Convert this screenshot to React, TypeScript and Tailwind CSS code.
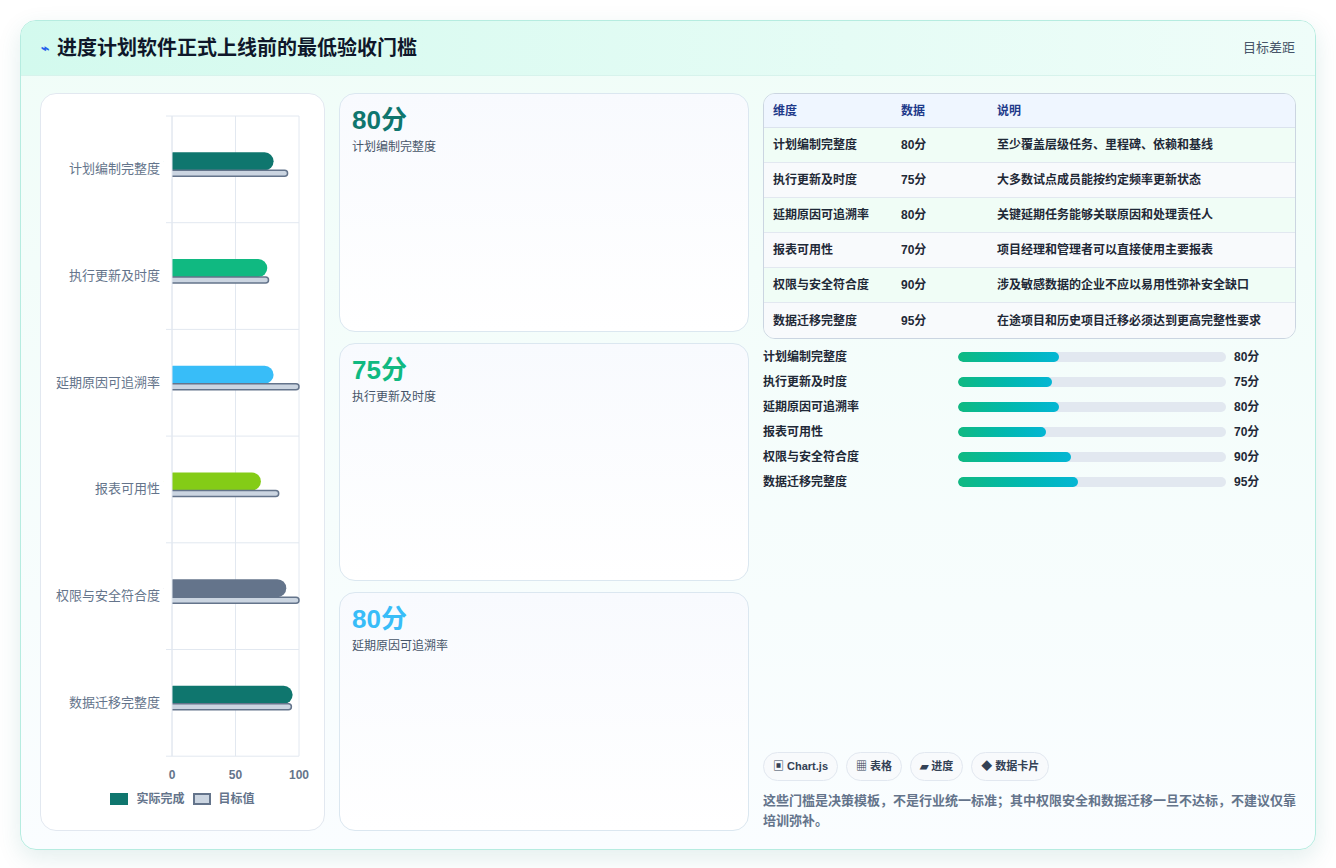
const rows = [
  { name: "计划编制完整度", v: 80, t: 91, c: "#0f766e", note: "至少覆盖层级任务、里程碑、依赖和基线" },
  { name: "执行更新及时度", v: 75, t: 76, c: "#10b981", note: "大多数试点成员能按约定频率更新状态" },
  { name: "延期原因可追溯率", v: 80, t: 100, c: "#38bdf8", note: "关键延期任务能够关联原因和处理责任人" },
  { name: "报表可用性", v: 70, t: 84, c: "#84cc16", note: "项目经理和管理者可以直接使用主要报表" },
  { name: "权限与安全符合度", v: 90, t: 100, c: "#64748b", note: "涉及敏感数据的企业不应以易用性弥补安全缺口" },
  { name: "数据迁移完整度", v: 95, t: 94, c: "#0f766e", note: "在途项目和历史项目迁移必须达到更高完整性要求" },
];

const font = { fontFamily: '"Liberation Sans", "Noto Sans CJK SC", sans-serif' };

function Chart() {
  const x0 = 131, w = 127, top = 22, rowH = 106.7;
  return (
    <svg width="284" height="696" className="block">
      {[0, 50, 100].map((p) => (
        <line key={p} x1={x0 + (w * p) / 100} x2={x0 + (w * p) / 100} y1={top} y2={top + rowH * 6} stroke="#e2e8f0" />
      ))}
      {Array.from({ length: 7 }).map((_, i) => (
        <line key={i} x1={x0 - 6} x2={x0 + w} y1={top + rowH * i} y2={top + rowH * i} stroke="#e2e8f0" />
      ))}
      {rows.map((r, i) => {
        const cy = top + rowH * i + rowH / 2;
        return (
          <g key={r.name}>
            <text x={119} y={cy + 4} textAnchor="end" fontSize="13" fill="#64748b">{r.name}</text>
            <rect x={x0 - 8} y={cy - 17} width={(w * r.v) / 100 + 8} height={18} rx={9} fill={r.c} />
            <rect x={x0 - 6} y={cy + 1} width={(w * r.t) / 100 + 6} height={6} rx={3} fill="#cbd5e1" stroke="#64748b" strokeWidth="1.5" />
            <rect x={x0 - 8} y={cy - 18} width={8} height={28} fill="white" />
          </g>
        );
      })}
      <line x1={x0} x2={x0} y1={top} y2={top + rowH * 6} stroke="#e2e8f0" />
      {[0, 50, 100].map((p) => (
        <text key={p} x={x0 + (w * p) / 100} y={top + rowH * 6 + 23} textAnchor="middle" fontSize="12" fontWeight="bold" fill="#64748b">{p}</text>
      ))}
    </svg>
  );
}

export default function App() {
  const cards = [
    { v: "80分", n: "计划编制完整度", c: "text-[#0f766e]" },
    { v: "75分", n: "执行更新及时度", c: "text-[#10b981]" },
    { v: "80分", n: "延期原因可追溯率", c: "text-[#38bdf8]" },
  ];
  return (
    <div style={font} className="w-[1336px] h-[868px] bg-white pt-5 px-5 pb-[18px]">
      <div className="h-full rounded-2xl border border-[#b6ece0] shadow-[0_8px_24px_rgba(15,118,110,0.12)] overflow-hidden flex flex-col bg-gradient-to-b from-[#f0fdf8] to-[#fafdff]">
        <div className="h-[55px] shrink-0 flex items-center justify-between px-5 bg-gradient-to-r from-[#d3faee] to-[#effdf9] border-b border-[#d7f3ec]">
          <div className="flex items-center gap-2">
            <span className="text-[#2563eb] text-sm font-bold">⌁</span>
            <h1 className="text-[20px] font-bold text-[#0f172a]">进度计划软件正式上线前的最低验收门槛</h1>
          </div>
          <span className="text-[13px] text-[#475569]">目标差距</span>
        </div>
        <div className="flex-1 min-h-0 flex gap-[14px] px-[19px] pt-[17px] pb-[18px]">
          <div className="w-[285px] shrink-0 bg-white rounded-2xl border border-[#e2e8f0] flex flex-col">
            <Chart />
            <div className="flex items-center justify-center gap-2 text-[12px] font-bold text-[#64748b]">
              <span className="w-[18px] h-[12px] bg-[#0f766e]" />实际完成
              <span className="w-[18px] h-[12px] bg-[#cbd5e1] border-2 border-[#64748b]" />目标值
            </div>
          </div>
          <div className="w-[410px] shrink-0 flex flex-col gap-[11px]">
            {cards.map((c) => (
              <div key={c.n} className="flex-1 rounded-2xl border border-[#dbe7f0] bg-gradient-to-b from-[#f8fafe] to-white px-3 pt-[10px]">
                <div className={`text-[26px] font-bold leading-8 ${c.c}`}>{c.v}</div>
                <div className="text-[12px] text-[#475569] mt-[2px]">{c.n}</div>
              </div>
            ))}
          </div>
          <div className="flex-1 flex flex-col min-w-0">
            <div className="rounded-xl border border-[#cbd5e1] overflow-hidden text-[12px]">
              <div className="flex h-[34px] items-center bg-[#eff6ff] text-[#1e3a8a] font-bold border-b border-[#dbe3ee]">
                <div className="w-[137px] pl-[9px]">维度</div>
                <div className="w-[96px]">数据</div>
                <div>说明</div>
              </div>
              {rows.map((r, i) => (
                <div key={r.name} className={`flex h-[35px] items-center text-[#1f2937] font-semibold ${i < 5 ? "border-b border-[#e2e8f0]" : ""} ${i % 2 ? "bg-[#f8fafc]" : "bg-[#f0fdf6]"}`}>
                  <div className="w-[137px] pl-[9px]">{r.name}</div>
                  <div className="w-[96px]">{r.v}分</div>
                  <div>{r.note}</div>
                </div>
              ))}
            </div>
            <div className="mt-[9px] flex flex-col gap-[7px]">
              {rows.map((r) => (
                <div key={r.name} className="flex items-center h-[18px] text-[12px] font-semibold text-[#1f2937]">
                  <div className="w-[195px]">{r.name}</div>
                  <div className="w-[268px] h-[10px] rounded-full bg-[#e2e8f0] overflow-hidden">
                    <div className="h-full rounded-full bg-gradient-to-r from-[#10b981] to-[#06b6d4]" style={{ width: `${r.v * 0.47}%` }} />
                  </div>
                  <div className="ml-2">{r.v}分</div>
                </div>
              ))}
            </div>
            <div className="mt-auto">
              <div className="flex gap-2 text-[11px] font-bold text-[#334155]">
                {["▣ Chart.js", "▦ 表格", "▰ 进度", "◆ 数据卡片"].map((t) => (
                  <span key={t} className="h-[29px] px-[9px] flex items-center rounded-full border border-[#e2e8f0] bg-[#f8fafc]">{t}</span>
                ))}
              </div>
              <p className="mt-[10px] text-[13px] leading-5 font-semibold text-[#64748b]">
                这些门槛是决策模板，不是行业统一标准；其中权限安全和数据迁移一旦不达标，不建议仅靠培训弥补。
              </p>
            </div>
          </div>
        </div>
      </div>
    </div>
  );
}
